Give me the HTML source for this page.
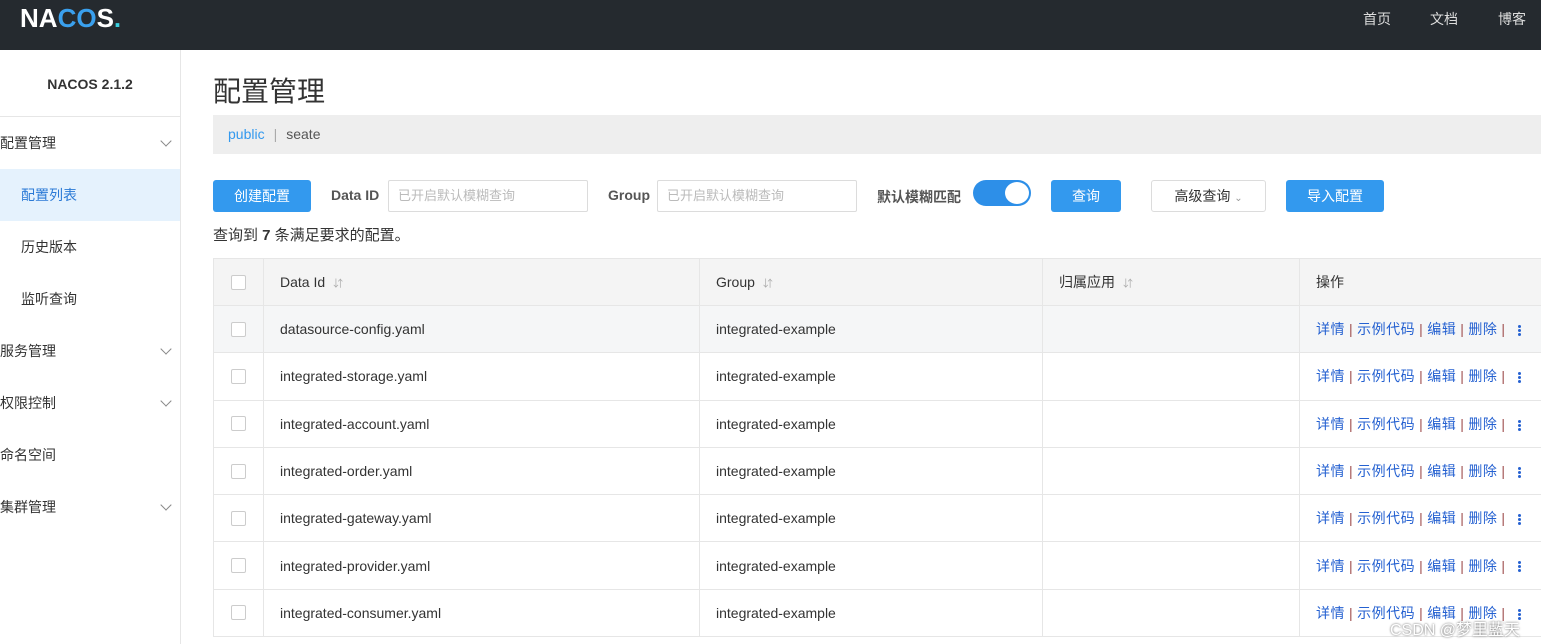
<!DOCTYPE html>
<html><head><meta charset="utf-8"><style>
*{box-sizing:border-box;margin:0;padding:0}
body{width:1541px;height:644px;overflow:hidden;background:#fff;font-family:"Liberation Sans","Noto Sans CJK SC",sans-serif;color:#333;font-size:14px;position:relative}
.hd{position:absolute;left:0;top:0;width:1541px;height:50px;background:#252a2f}
.logo{position:absolute;left:20px;top:3px;color:#fff;font-size:26px;font-weight:bold}
.nav{position:absolute;top:9px;color:#ddd;font-size:14px}
.sb{position:absolute;left:0;top:50px;width:181px;height:594px;border-right:1px solid #e6e6e6}
.ver{position:absolute;left:0;top:0;width:180px;height:67px;border-bottom:1px solid #e6e6e6;text-align:center;line-height:68px;font-weight:bold;font-size:14px;color:#333}
.mi{position:absolute;left:0;width:180px;height:52px;line-height:52px;font-size:14px;color:#333}
.mi.sel{background:#e5f2fd;color:#2b7ad6}
.chev{position:absolute;right:10px;top:20px;width:8px;height:8px;border-right:1px solid #888;border-bottom:1px solid #888;transform:rotate(45deg)}
.abs{position:absolute}
.btn{position:absolute;background:#3399ee;color:#fff;text-align:center;border-radius:3px;font-size:14px;height:32px;line-height:32px}
.inp{position:absolute;height:32px;border:1px solid #dcdcdc;border-radius:2px;color:#bbb;font-size:13px;line-height:30px;padding-left:9px}
table{position:absolute;left:213px;top:258px;border-collapse:collapse;width:1340px}
td{border:1px solid #e6e6e6;height:47.3px;padding-left:16px;font-size:14px;color:#333}
tr.h td{background:#f4f4f4;height:47px}
tr.g td{background:#f5f6f7}
.cb{width:15px;height:15px;border:1px solid #ccc;border-radius:2px;background:#fff;margin-left:1px}
.op{color:#2561d1;font-size:14px;letter-spacing:0.5px}
.op i{font-style:normal;color:#a05050;margin:0 4px}
.dots{display:inline-block;vertical-align:middle;margin-left:8px;width:3px}
.dots b{display:block;width:3px;height:3px;background:#2561d1;border-radius:50%;margin:1px 0}
.s{color:#aaa;font-size:10px;margin-left:8px}
</style></head><body>
<div class="hd"><div class="logo">NA<span style="color:#3aa0ee">CO</span>S<span style="color:#3ad0e0">.</span></div>
<span class="nav" style="left:1363px">首页</span><span class="nav" style="left:1430px">文档</span><span class="nav" style="left:1498px">博客</span></div>
<div class="sb"><div class="ver">NACOS 2.1.2</div>
<div class="mi" style="top:67px">配置管理<span class="chev"></span></div>
<div class="mi sel" style="top:119px;padding-left:21px">配置列表</div>
<div class="mi" style="top:171px;padding-left:21px">历史版本</div>
<div class="mi" style="top:223px;padding-left:21px">监听查询</div>
<div class="mi" style="top:275px">服务管理<span class="chev"></span></div>
<div class="mi" style="top:327px">权限控制<span class="chev"></span></div>
<div class="mi" style="top:379px">命名空间</div>
<div class="mi" style="top:431px">集群管理<span class="chev"></span></div>
</div>
<div class="abs" style="left:213px;top:70px;font-size:28px;color:#333">配置管理</div>
<div class="abs" style="left:213px;top:115px;width:1328px;height:39px;background:#eee;line-height:39px;padding-left:15px;font-size:14px"><span style="color:#3399ee">public</span><span style="color:#aaa;margin:0 9px">|</span><span style="color:#555">seate</span></div>
<div class="btn" style="left:213px;top:180px;width:98px">创建配置</div>
<div class="abs" style="left:331px;top:187px;font-weight:bold;color:#555">Data ID</div>
<div class="inp" style="left:388px;top:180px;width:200px">已开启默认模糊查询</div>
<div class="abs" style="left:608px;top:187px;font-weight:bold;color:#555">Group</div>
<div class="inp" style="left:657px;top:180px;width:200px">已开启默认模糊查询</div>
<div class="abs" style="left:877px;top:187px;font-weight:bold;color:#555">默认模糊匹配</div>
<div class="abs" style="left:973px;top:180px;width:58px;height:26px;border-radius:13px;background:#2d8fe8"><div style="position:absolute;right:2px;top:2px;width:24px;height:22px;border-radius:50%;background:#fff"></div></div>
<div class="btn" style="left:1051px;top:180px;width:70px">查询</div>
<div class="abs" style="left:1151px;top:180px;width:115px;height:32px;border:1px solid #dcdcdc;border-radius:3px;text-align:center;line-height:30px;color:#333">高级查询 <span style="color:#999;font-size:10px">⌄</span></div>
<div class="btn" style="left:1286px;top:180px;width:98px">导入配置</div>
<div class="abs" style="left:213px;top:224px;font-size:15px">查询到 <b>7</b> 条满足要求的配置。</div>
<table>
<colgroup><col style="width:50px"><col style="width:436px"><col style="width:343px"><col style="width:257px"><col></colgroup>
<tr class="h"><td><div class="cb"></div></td><td>Data Id<span class="s">⇵</span></td><td>Group<span class="s">⇵</span></td><td>归属应用<span class="s">⇵</span></td><td>操作</td></tr>
<tr class="g"><td><div class="cb"></div></td><td>datasource-config.yaml</td><td>integrated-example</td><td></td><td class="op">详情<i>|</i>示例代码<i>|</i>编辑<i>|</i>删除<i>|</i><span class="dots"><b></b><b></b><b></b></span></td></tr>
<tr><td><div class="cb"></div></td><td>integrated-storage.yaml</td><td>integrated-example</td><td></td><td class="op">详情<i>|</i>示例代码<i>|</i>编辑<i>|</i>删除<i>|</i><span class="dots"><b></b><b></b><b></b></span></td></tr>
<tr><td><div class="cb"></div></td><td>integrated-account.yaml</td><td>integrated-example</td><td></td><td class="op">详情<i>|</i>示例代码<i>|</i>编辑<i>|</i>删除<i>|</i><span class="dots"><b></b><b></b><b></b></span></td></tr>
<tr><td><div class="cb"></div></td><td>integrated-order.yaml</td><td>integrated-example</td><td></td><td class="op">详情<i>|</i>示例代码<i>|</i>编辑<i>|</i>删除<i>|</i><span class="dots"><b></b><b></b><b></b></span></td></tr>
<tr><td><div class="cb"></div></td><td>integrated-gateway.yaml</td><td>integrated-example</td><td></td><td class="op">详情<i>|</i>示例代码<i>|</i>编辑<i>|</i>删除<i>|</i><span class="dots"><b></b><b></b><b></b></span></td></tr>
<tr><td><div class="cb"></div></td><td>integrated-provider.yaml</td><td>integrated-example</td><td></td><td class="op">详情<i>|</i>示例代码<i>|</i>编辑<i>|</i>删除<i>|</i><span class="dots"><b></b><b></b><b></b></span></td></tr>
<tr><td><div class="cb"></div></td><td>integrated-consumer.yaml</td><td>integrated-example</td><td></td><td class="op">详情<i>|</i>示例代码<i>|</i>编辑<i>|</i>删除<i>|</i><span class="dots"><b></b><b></b><b></b></span></td></tr>
</table>
<div class="abs" style="left:1390px;top:616px;color:#fff;font-size:16px;text-shadow:0 0 2px #555">CSDN @梦里藍天</div>
</body></html>
